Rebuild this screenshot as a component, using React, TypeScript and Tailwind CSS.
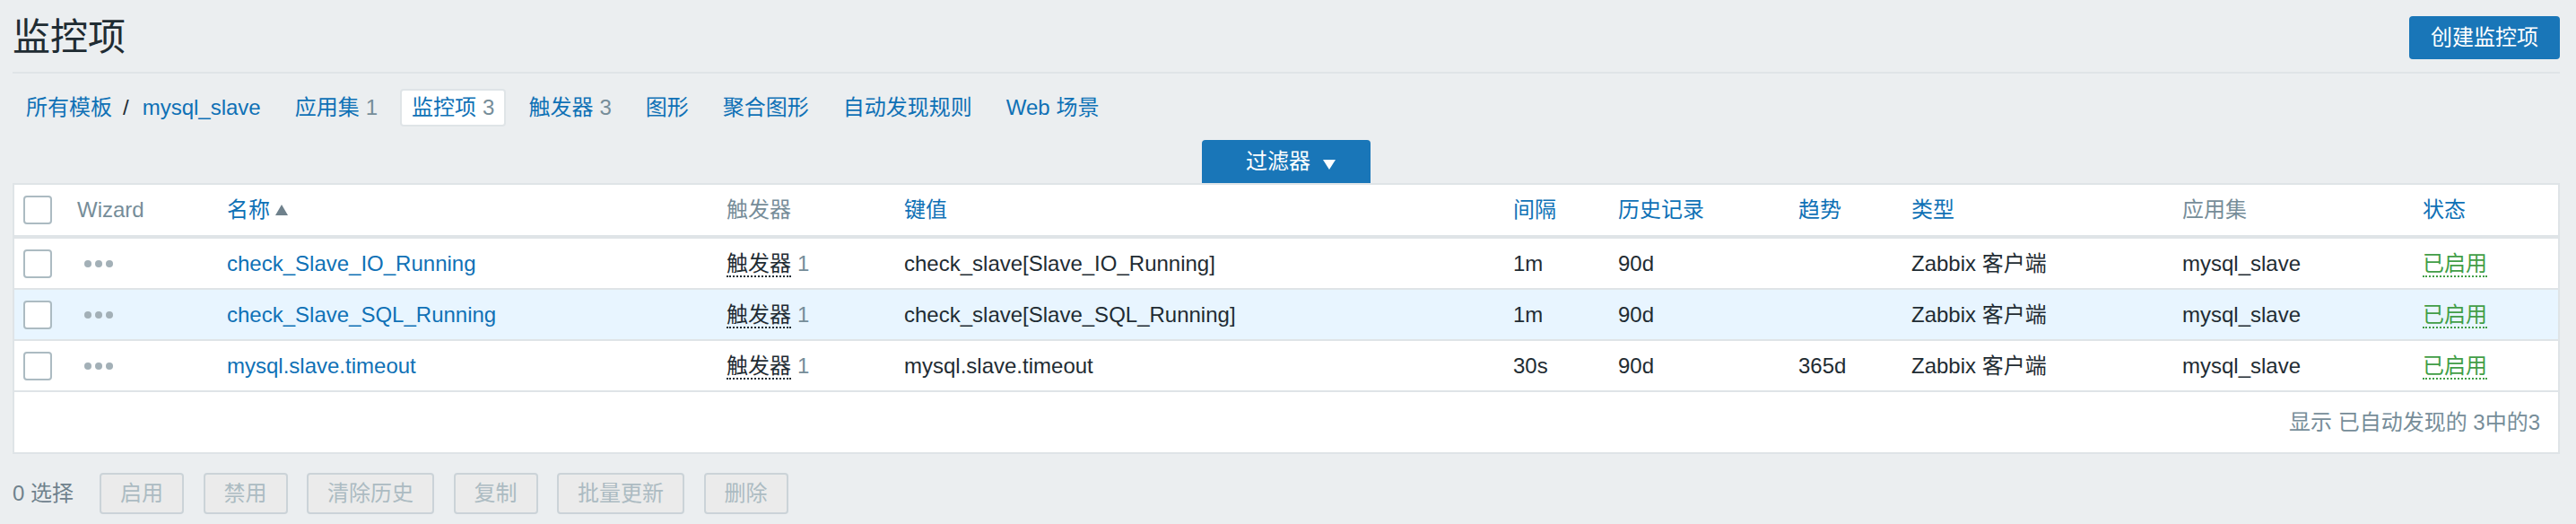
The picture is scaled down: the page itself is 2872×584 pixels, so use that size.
import React from 'react';

const rows = [
  { name: 'check_Slave_IO_Running', key: 'check_slave[Slave_IO_Running]', interval: '1m', history: '90d', trends: '', hl: false },
  { name: 'check_Slave_SQL_Running', key: 'check_slave[Slave_SQL_Running]', interval: '1m', history: '90d', trends: '', hl: true },
  { name: 'mysql.slave.timeout', key: 'mysql.slave.timeout', interval: '30s', history: '90d', trends: '365d', hl: false },
];

function Checkbox() {
  return <div className="w-[32px] h-[32px] border-2 border-[#acbbc2] rounded-[4px] bg-white" />;
}

function Dots() {
  return (
    <svg width="32" height="8" viewBox="0 0 32 8" className="ml-[8px] block">
      <circle cx="4" cy="4" r="4" fill="#a3b0b7" />
      <circle cx="16" cy="4" r="4" fill="#a3b0b7" />
      <circle cx="28" cy="4" r="4" fill="#a3b0b7" />
    </svg>
  );
}

export default function App() {
  const link = 'text-[#0f71b6]';
  const gray = 'text-[#768d99]';
  const th = 'h-[60px] px-[10px] text-left font-normal border-b-4 border-[#dfe4e7] align-middle';
  const td = 'h-[57px] px-[10px] border-b-2 border-[#dfe4e7] align-middle';
  return (
    <div className="w-[2872px] min-h-[584px] bg-[#ebeef0] pl-[14px] pr-[18px] text-[24px] leading-[28px] text-[#1f2c33] font-['Liberation_Sans','Noto_Sans_CJK_SC',sans-serif]">
      {/* header */}
      <div className="flex items-center justify-between h-[82px] pt-[4px] border-b-2 border-[#dfe4e7]">
        <h1 className="text-[42px] leading-[48px] text-[#1f2c33]">监控项</h1>
        <button className="h-[48px] px-[24px] bg-[#1976b8] text-white rounded-[4px] leading-[28px]">创建监控项</button>
      </div>

      {/* nav */}
      <div className="mt-[17px] h-[42px] flex items-center gap-[12px] pl-[2px]">
        <div className="h-[42px] px-[13px] flex items-center">
          <span className={link}>所有模板</span>
          <span className="ml-[12px] mr-[15px]">/</span>
          <span className={link}>mysql_slave</span>
        </div>
        <div className="h-[42px] px-[13px] flex items-center">
          <span className={link}>应用集</span>
          <span className={`${gray} ml-[7px]`}>1</span>
        </div>
        <div className="h-[42px] px-[11px] flex items-center bg-white border-2 border-[#dfe4e7] rounded-[4px]">
          <span className={link}>监控项</span>
          <span className={`${gray} ml-[7px]`}>3</span>
        </div>
        <div className="h-[42px] px-[13px] flex items-center">
          <span className={link}>触发器</span>
          <span className={`${gray} ml-[7px]`}>3</span>
        </div>
        <div className="h-[42px] px-[13px] flex items-center"><span className={link}>图形</span></div>
        <div className="h-[42px] px-[13px] flex items-center"><span className={link}>聚合图形</span></div>
        <div className="h-[42px] px-[13px] flex items-center"><span className={link}>自动发现规则</span></div>
        <div className="h-[42px] px-[13px] flex items-center"><span className={link}>Web 场景</span></div>
      </div>

      {/* filter tab */}
      <div className="mt-[15px] flex justify-center">
        <div className="h-[48px] w-[188px] pl-[49px] bg-[#1976b8] rounded-t-[4px] text-white flex items-center">
          <span>过滤器</span>
          <svg width="14" height="11" viewBox="0 0 14 11" className="ml-[14px] mt-[7px] block">
            <polygon points="0,0 14,0 7,11" fill="#ffffff" />
          </svg>
        </div>
      </div>

      {/* table */}
      <div className="border-2 border-[#dfe4e7] bg-white">
        <table className="w-full table-fixed border-separate border-spacing-0">
          <colgroup>
            <col className="w-[60px]" />
            <col className="w-[167px]" />
            <col className="w-[557px]" />
            <col className="w-[198px]" />
            <col className="w-[679px]" />
            <col className="w-[117px]" />
            <col className="w-[201px]" />
            <col className="w-[126px]" />
            <col className="w-[302px]" />
            <col className="w-[268px]" />
            <col className="w-[161px]" />
          </colgroup>
          <thead>
            <tr>
              <th className={th}><Checkbox /></th>
              <th className={`${th} ${gray}`}>Wizard</th>
              <th className={th}>
                <span className="inline-flex items-center">
                  <span className={link}>名称</span>
                  <svg width="14" height="12" viewBox="0 0 14 12" className="ml-[6px] block">
                    <polygon points="7,0 14,12 0,12" fill="#6f818c" />
                  </svg>
                </span>
              </th>
              <th className={`${th} ${gray}`}>触发器</th>
              <th className={`${th} ${link}`}>键值</th>
              <th className={`${th} ${link}`}>间隔</th>
              <th className={`${th} ${link}`}>历史记录</th>
              <th className={`${th} ${link}`}>趋势</th>
              <th className={`${th} ${link}`}>类型</th>
              <th className={`${th} ${gray}`}>应用集</th>
              <th className={`${th} ${link}`}>状态</th>
            </tr>
          </thead>
          <tbody>
            {rows.map((r) => (
              <tr key={r.name} className={r.hl ? 'bg-[#e8f5ff]' : 'bg-white'}>
                <td className={td}><Checkbox /></td>
                <td className={td}><Dots /></td>
                <td className={`${td} ${link}`}>{r.name}</td>
                <td className={td}>
                  <span className="border-b-2 border-dotted border-[#1f2c33]">触发器</span>
                  <span className={`${gray} ml-[7px]`}>1</span>
                </td>
                <td className={td}>{r.key}</td>
                <td className={td}>{r.interval}</td>
                <td className={td}>{r.history}</td>
                <td className={td}>{r.trends}</td>
                <td className={td}>Zabbix 客户端</td>
                <td className={td}>mysql_slave</td>
                <td className={td}>
                  <span className="text-[#429e47] border-b-2 border-dotted border-[#429e47]">已启用</span>
                </td>
              </tr>
            ))}
          </tbody>
        </table>
        <div className="h-[67px] flex items-center justify-end pr-[20px] text-[#768d99]">
          显示 已自动发现的 3中的3
        </div>
      </div>

      {/* action bar */}
      <div className="mt-[21px] flex items-center">
        <span className="text-[#6f828d]">0 选择</span>
        <div className="ml-[29px] flex items-center gap-[21.5px]">
          {['启用', '禁用', '清除历史', '复制', '批量更新', '删除'].map((b) => (
            <button
              key={b}
              className="h-[46px] px-[21px] border-2 border-[#cbd3d8] bg-[#ebebeb] text-[#acbbc2] rounded-[4px] leading-[28px]"
            >
              {b}
            </button>
          ))}
        </div>
      </div>
    </div>
  );
}
